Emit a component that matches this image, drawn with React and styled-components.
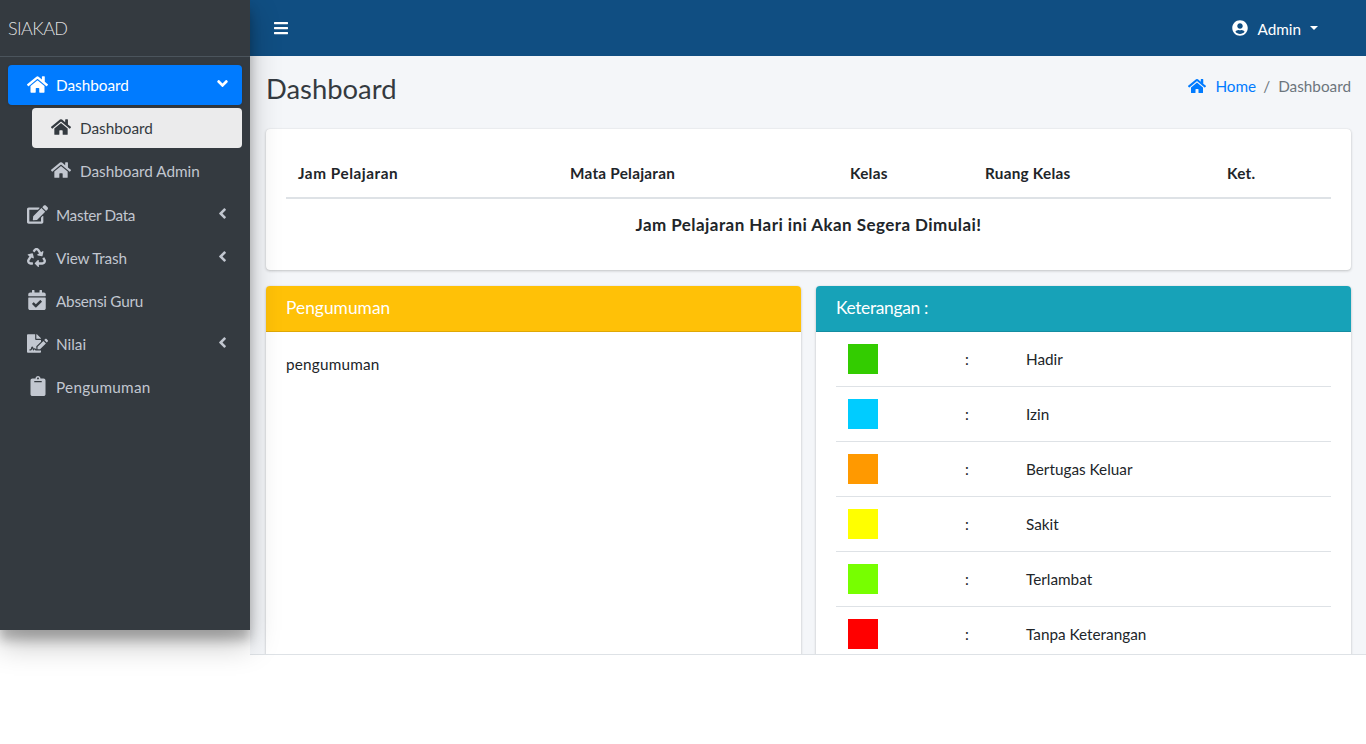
import React from 'react'
import styled, { createGlobalStyle } from 'styled-components'
import {
  FaHome, FaAngleDown, FaAngleLeft, FaEdit, FaRecycle, FaCalendarCheck,
  FaFileSignature, FaClipboard, FaUserCircle, FaBars,
} from 'react-icons/fa'

const Global = createGlobalStyle`
html, body { margin: 0; padding: 0; background: #fff; overflow: hidden; }
body { font-family: "Lato", "Liberation Sans", sans-serif; font-size: 16px; color: #212529; }
* { box-sizing: border-box; }
`
const Shell = styled.div`
display: flex;
align-items: flex-start;
height: 744px;
`
const Sidebar = styled.aside`
position: relative;
z-index: 2;
width: 250px;
height: 630px;
flex: 0 0 250px;
background: #343a40;
box-shadow: 0 14px 28px rgba(0,0,0,.25), 0 10px 10px rgba(0,0,0,.22);
`
const Brand = styled.div`
height: 57px;
padding: 0 8px;
display: flex;
align-items: center;
font-size: 18px;
font-weight: 300;
letter-spacing: -.6px;
color: rgba(255,255,255,.85);
border-bottom: 1px solid #4b545c;
`
const Nav = styled.nav`
padding: 8px 8px 0;
display: flex;
flex-direction: column;
`
const Item = styled.div`
display: flex;
align-items: center;
height: 40px;
margin-bottom: ${p => p.$gap ?? 3}px;
margin-left: ${p => p.$sub ? 24 : 0}px;
padding-left: 19px;
padding-right: 11px;
border-radius: 4px;
font-size: 15.3px;
background: ${p => p.$active ? '#007bff' : p.$current ? 'rgba(255,255,255,.9)' : 'transparent'};
color: ${p => p.$active ? '#fff' : p.$current ? '#343a40' : '#c2c7d0'};
box-shadow: ${p => p.$active ? '0 1px 3px rgba(0,0,0,.12)' : 'none'};
`
const ItemIcon = styled.span`
width: 29px;
flex: 0 0 29px;
display: flex;
justify-content: flex-start;
margin-top: -2px;
font-size: ${p => p.$size ?? 21}px;
padding-left: ${p => p.$pad ?? 0}px;
`
const ItemLabel = styled.span`
flex: 1;
letter-spacing: ${p => p.$track ?? 0}px;
`
const Arrow = styled.span`
display: flex;
font-size: 17px;
margin-top: -3px;
`
const Main = styled.div`
flex: 1;
min-width: 0;
height: 655px;
display: flex;
flex-direction: column;
background: #f4f6f9;
border-bottom: 1px solid #dee2e6;
overflow: hidden;
`
const Topbar = styled.header`
height: 56px;
flex: 0 0 56px;
background: #104e82;
color: #fff;
display: flex;
align-items: center;
justify-content: space-between;
padding: 0 48px 0 23px;
`
const Burger = styled.span`
display: flex;
font-size: 16px;
`
const UserMenu = styled.div`
display: flex;
align-items: center;
font-size: 15.3px;
padding-top: 2px;
`
const UserIcon = styled.span`
display: flex;
font-size: 16px;
margin-right: 9px;
margin-top: -2px;
`
const Caret = styled.span`
width: 0;
height: 0;
margin-left: 9px;
margin-top: -3px;
border-top: 4.8px solid #fff;
border-left: 4.8px solid transparent;
border-right: 4.8px solid transparent;
`
const Content = styled.main`
padding: 0 15px 0 16px;
flex: 1;
`
const Heading = styled.div`
height: 73px;
display: flex;
align-items: center;
justify-content: space-between;
`
const Title = styled.h1`
margin: 0 0 9px;
font-size: 27.4px;
font-weight: 400;
color: #343a40;
`
const Crumbs = styled.div`
display: flex;
align-items: center;
font-size: 15.3px;
color: #6c757d;
margin-bottom: 14px;
`
const CrumbLink = styled.span`
display: flex;
align-items: center;
color: #007bff;
svg { font-size: 18px; margin-right: 9px; }
`
const Sep = styled.span`
padding: 0 8px 0 7px;
`
const Card = styled.section`
background: #fff;
border-radius: 4px;
box-shadow: 0 0 1px rgba(0,0,0,.125), 0 1px 3px rgba(0,0,0,.2);
`
const ScheduleCard = styled(Card)`
height: 141px;
margin-bottom: 16px;
padding: 20px;
`
const Table = styled.div`
display: flex;
flex-direction: column;
`
const HeadRow = styled.div`
display: grid;
grid-template-columns: 272px 280px 135px 242px 1fr;
height: 50px;
align-items: center;
padding: 0 12px;
border-bottom: 2px solid #dee2e6;
font-size: 15.3px;
font-weight: 700;
`
const HeadCell = styled.span`
letter-spacing: ${p => p.$track ?? 0.25}px;
`
const Notice = styled.div`
text-align: center;
font-size: 17px;
font-weight: 700;
letter-spacing: .44px;
padding-top: 15px;
`
const Columns = styled.div`
display: grid;
grid-template-columns: 535px 535px;
gap: 15px;
`
const PanelCard = styled(Card)`
height: 400px;
overflow: hidden;
`
const PanelHead = styled.div`
height: 46px;
display: flex;
align-items: center;
padding: 0 20px 2px;
font-size: 17.4px;
letter-spacing: ${p => p.$track ?? 0}px;
color: #fff;
background: ${p => p.$bg};
border-bottom: 1px solid rgba(0,0,0,.125);
`
const PanelBody = styled.div`
padding: 23px 20px;
font-size: 15.3px;
letter-spacing: .2px;
`
const LegendList = styled.div`
padding: 0 20px;
`
const LegendRow = styled.div`
display: grid;
grid-template-columns: 117px 61px 1fr;
height: 55px;
align-items: center;
padding-left: 12px;
border-bottom: 1px solid #dee2e6;
font-size: 15.3px;
`
const Swatch = styled.span`
width: 30px;
height: 30px;
background: ${p => p.$color};
`

const legend = [
  ['#33cc00', 'Hadir'],
  ['#00ccff', 'Izin'],
  ['#ff9900', 'Bertugas Keluar'],
  ['#ffff00', 'Sakit'],
  ['#77ff00', 'Terlambat'],
  ['#ff0000', 'Tanpa Keterangan'],
]

export default function App() {
  return (
    <Shell>
      <Global />
      <Sidebar>
        <Brand>SIAKAD</Brand>
        <Nav>
          <Item $active $gap={3}>
            <ItemIcon><FaHome /></ItemIcon>
            <ItemLabel>Dashboard</ItemLabel>
            <Arrow><FaAngleDown /></Arrow>
          </Item>
          <Item $sub $current>
            <ItemIcon $size={20}><FaHome /></ItemIcon>
            <ItemLabel>Dashboard</ItemLabel>
          </Item>
          <Item $sub $gap={4}>
            <ItemIcon $size={20}><FaHome /></ItemIcon>
            <ItemLabel>Dashboard Admin</ItemLabel>
          </Item>
          <Item>
            <ItemIcon><FaEdit /></ItemIcon>
            <ItemLabel $track={-0.35}>Master Data</ItemLabel>
            <Arrow><FaAngleLeft /></Arrow>
          </Item>
          <Item>
            <ItemIcon $size={19}><FaRecycle /></ItemIcon>
            <ItemLabel $track={-0.2}>View Trash</ItemLabel>
            <Arrow><FaAngleLeft /></Arrow>
          </Item>
          <Item>
            <ItemIcon $size={20}><FaCalendarCheck /></ItemIcon>
            <ItemLabel $track={-0.25}>Absensi Guru</ItemLabel>
          </Item>
          <Item>
            <ItemIcon><FaFileSignature /></ItemIcon>
            <ItemLabel>Nilai</ItemLabel>
            <Arrow><FaAngleLeft /></Arrow>
          </Item>
          <Item>
            <ItemIcon $size={20} $pad={1}><FaClipboard /></ItemIcon>
            <ItemLabel $track={0.3}>Pengumuman</ItemLabel>
          </Item>
        </Nav>
      </Sidebar>
      <Main>
        <Topbar>
          <Burger><FaBars /></Burger>
          <UserMenu>
            <UserIcon><FaUserCircle /></UserIcon>
            Admin
            <Caret />
          </UserMenu>
        </Topbar>
        <Content>
          <Heading>
            <Title>Dashboard</Title>
            <Crumbs>
              <CrumbLink><FaHome />Home</CrumbLink>
              <Sep>/</Sep>
              Dashboard
            </Crumbs>
          </Heading>
          <ScheduleCard>
            <Table>
              <HeadRow>
                <HeadCell $track={0.55}>Jam Pelajaran</HeadCell>
                <HeadCell>Mata Pelajaran</HeadCell>
                <HeadCell>Kelas</HeadCell>
                <HeadCell>Ruang Kelas</HeadCell>
                <HeadCell>Ket.</HeadCell>
              </HeadRow>
              <Notice>Jam Pelajaran Hari ini Akan Segera Dimulai!</Notice>
            </Table>
          </ScheduleCard>
          <Columns>
            <PanelCard>
              <PanelHead $bg="#ffc107">Pengumuman</PanelHead>
              <PanelBody>pengumuman</PanelBody>
            </PanelCard>
            <PanelCard>
              <PanelHead $bg="#17a2b8" $track={-0.35}>Keterangan :</PanelHead>
              <LegendList>
                {legend.map(([color, label]) => (
                  <LegendRow key={label}>
                    <Swatch $color={color} />
                    <span>:</span>
                    <span>{label}</span>
                  </LegendRow>
                ))}
              </LegendList>
            </PanelCard>
          </Columns>
        </Content>
      </Main>
    </Shell>
  )
}
